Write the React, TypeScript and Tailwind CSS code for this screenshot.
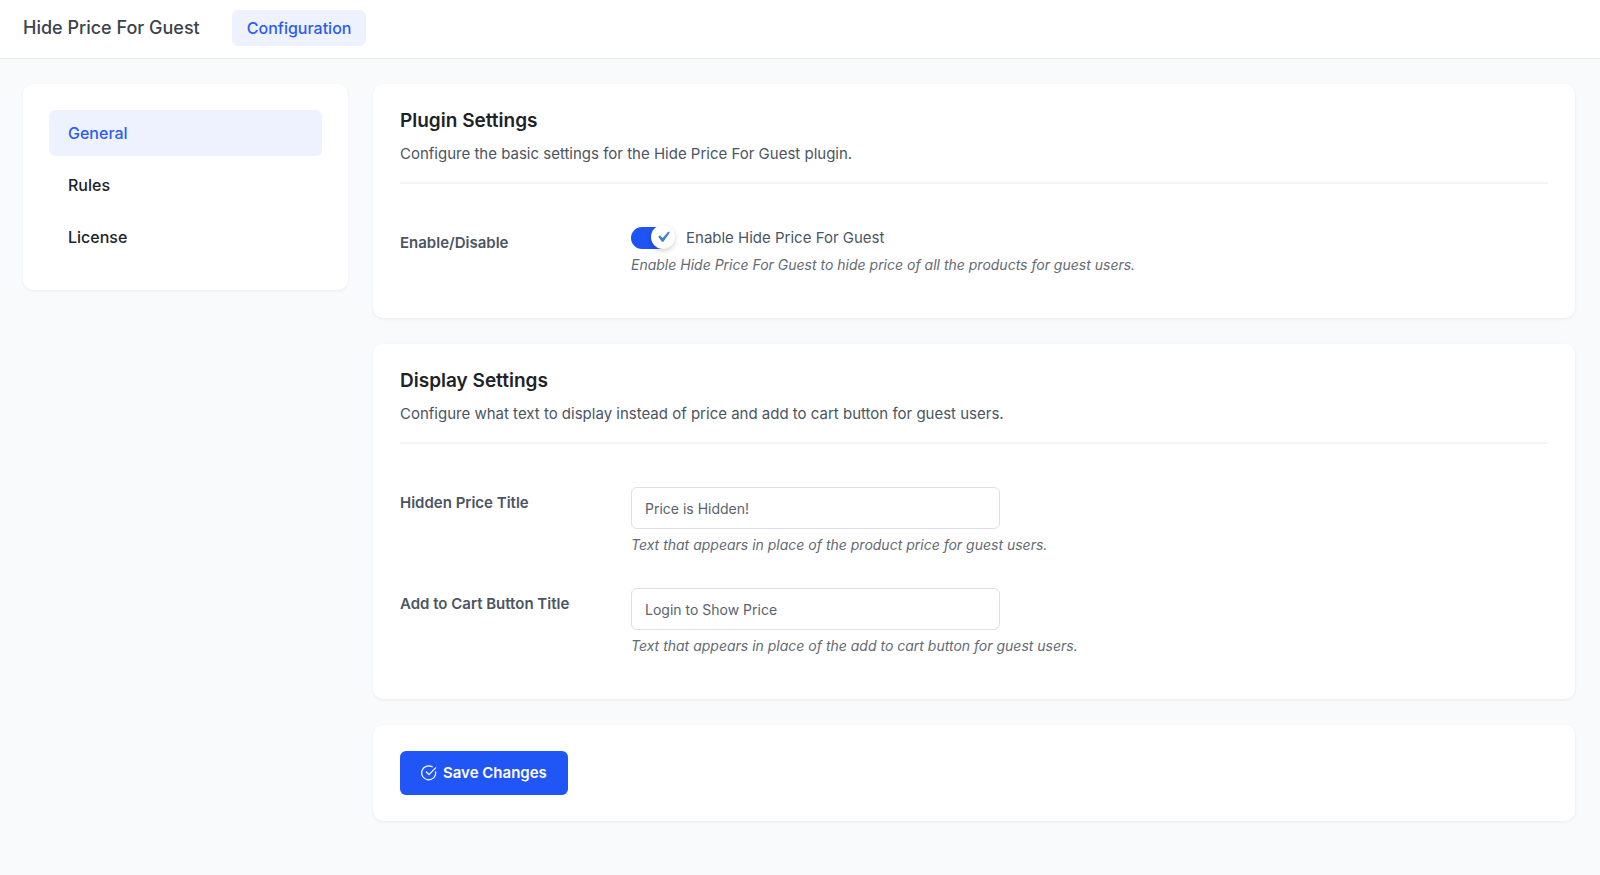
import { useState } from "react";
import type { ReactNode } from "react";

interface SectionProps {
  title: string;
  description: string;
  children: ReactNode;
}

interface TextFieldProps {
  id: string;
  label: string;
  help: string;
  value: string;
  onChange: (value: string) => void;
}

const menu = ["General", "Rules", "License"];

const Card = ({ children }: { children: ReactNode }) => (
  <section className="rounded-[10px] bg-white px-[27px] shadow-[0_1px_3px_rgba(16,24,40,0.07)]">
    {children}
  </section>
);

const Section = ({ title, description, children }: SectionProps) => (
  <Card>
    <div className="border-b-2 border-[#f3f4f6] pt-[25px] pb-4">
      <h2 className="text-[19px] leading-6 font-semibold text-[#1d2327]">
        {title}
      </h2>
      <p className="mt-[9px] text-[15px] leading-6 text-[#4b5563]">
        {description}
      </p>
    </div>
    {children}
  </Card>
);

const TextField = ({ id, label, help, value, onChange }: TextFieldProps) => (
  <div className="flex">
    <label
      htmlFor={id}
      className="w-[231px] shrink-0 pt-1 text-[15px] leading-6 font-semibold text-[#4b5563]"
    >
      {label}
    </label>
    <div className="flex-1">
      <input
        id={id}
        type="text"
        value={value}
        onChange={(e) => onChange(e.target.value)}
        className="block h-[42px] w-full max-w-[369px] rounded-md border border-[#dcdfe4] bg-white px-[13px] text-[14px] text-[#5b626d] outline-none focus:border-[#2156f6]"
      />
      <p className="mt-1 text-[14px] leading-6 text-[#646a74] italic">{help}</p>
    </div>
  </div>
);

const App = () => {
  const [active, setActive] = useState("General");
  const [enabled, setEnabled] = useState(true);
  const [priceTitle, setPriceTitle] = useState("Price is Hidden!");
  const [cartTitle, setCartTitle] = useState("Login to Show Price");

  return (
    <div className="min-h-screen bg-[#f9fafc] font-[Inter,sans-serif]">
      <header className="flex items-center gap-8 border-b border-[#e8eaed] bg-white px-[23px] pt-[10px] pb-3">
        <h1 className="text-[18px] leading-6 font-medium text-[#3c434a]">
          Hide Price For Guest
        </h1>
        <a
          href="#configuration"
          className="rounded-md bg-[#eef2fe] px-[15px] py-1.5 text-[16px] leading-6 font-medium text-[#2b5bf7]"
        >
          Configuration
        </a>
      </header>

      <div className="flex items-start gap-[25px] pt-[25px] pr-[25px] pb-6 pl-[23px]">
        <nav className="flex w-[325px] shrink-0 flex-col gap-1.5 rounded-[10px] bg-white px-[26px] pt-[26px] pb-[30px] shadow-[0_1px_3px_rgba(16,24,40,0.07)]">
          {menu.map((item) => (
            <button
              key={item}
              type="button"
              onClick={() => setActive(item)}
              className={
                item === active
                  ? "rounded-md bg-[#eef2fe] px-[19px] py-[11px] text-left text-[16px] leading-6 font-medium text-[#2b5bf7]"
                  : "rounded-md px-[19px] py-[11px] text-left text-[16px] leading-6 font-medium text-[#1d2327]"
              }
            >
              {item}
            </button>
          ))}
        </nav>

        <main className="flex min-w-0 flex-1 flex-col gap-[26px]">
          <Section
            title="Plugin Settings"
            description="Configure the basic settings for the Hide Price For Guest plugin."
          >
            <div className="flex pt-10 pb-[41px]">
              <label
                htmlFor="enable"
                className="w-[231px] shrink-0 pt-[7px] text-[15px] leading-6 font-semibold text-[#4b5563]"
              >
                Enable/Disable
              </label>
              <div className="flex-1">
                <label className="flex h-7 w-fit items-center gap-[11px] text-[15px] leading-6 text-[#4b5563]">
                  <span className="relative h-6 w-11">
                    <input
                      id="enable"
                      type="checkbox"
                      checked={enabled}
                      onChange={(e) => setEnabled(e.target.checked)}
                      className="peer absolute top-px left-0 h-[22px] w-10 appearance-none rounded-full bg-[#d1d5db] checked:bg-[#1f53f3]"
                    />
                    <span className="pointer-events-none absolute -top-px left-0 flex size-6 items-center justify-center rounded-full bg-white shadow-[0_2px_5px_rgba(0,0,0,0.18)] peer-checked:left-5">
                      {enabled && (
                        <svg viewBox="0 0 20 20" className="size-[22px]">
                          <path
                            d="M14.83 4.89l1.34.94-5.81 8.38H9.02L5.78 9.67l1.34-1.25 2.57 2.4z"
                            fill="#3f80c9"
                          />
                        </svg>
                      )}
                    </span>
                  </span>
                  Enable Hide Price For Guest
                </label>
                <p className="mt-px text-[14px] leading-6 text-[#646a74] italic">
                  Enable Hide Price For Guest to hide price of all the products
                  for guest users.
                </p>
              </div>
            </div>
          </Section>

          <Section
            title="Display Settings"
            description="Configure what text to display instead of price and add to cart button for guest users."
          >
            <div className="flex flex-col gap-[31px] pt-[43px] pb-[41px]">
              <TextField
                id="price-title"
                label="Hidden Price Title"
                help="Text that appears in place of the product price for guest users."
                value={priceTitle}
                onChange={setPriceTitle}
              />
              <TextField
                id="cart-title"
                label="Add to Cart Button Title"
                help="Text that appears in place of the add to cart button for guest users."
                value={cartTitle}
                onChange={setCartTitle}
              />
            </div>
          </Section>

          <Card>
            <div className="py-[26px]">
              <button
                type="button"
                className="flex h-11 items-center gap-1.5 rounded-md bg-[#2156f6] px-[21px] text-[15px] leading-6 font-semibold text-white"
              >
                <svg
                  viewBox="0 0 16 16"
                  fill="none"
                  stroke="currentColor"
                  strokeWidth="1.2"
                  strokeLinecap="round"
                  strokeLinejoin="round"
                  className="size-4"
                >
                  <path d="M14.6 6.8A7 7 0 1 1 11.2 1.8" />
                  <path d="M5.4 7 8 9.6l6.6-6.8" />
                </svg>
                Save Changes
              </button>
            </div>
          </Card>
        </main>
      </div>
    </div>
  );
};

export default App;
